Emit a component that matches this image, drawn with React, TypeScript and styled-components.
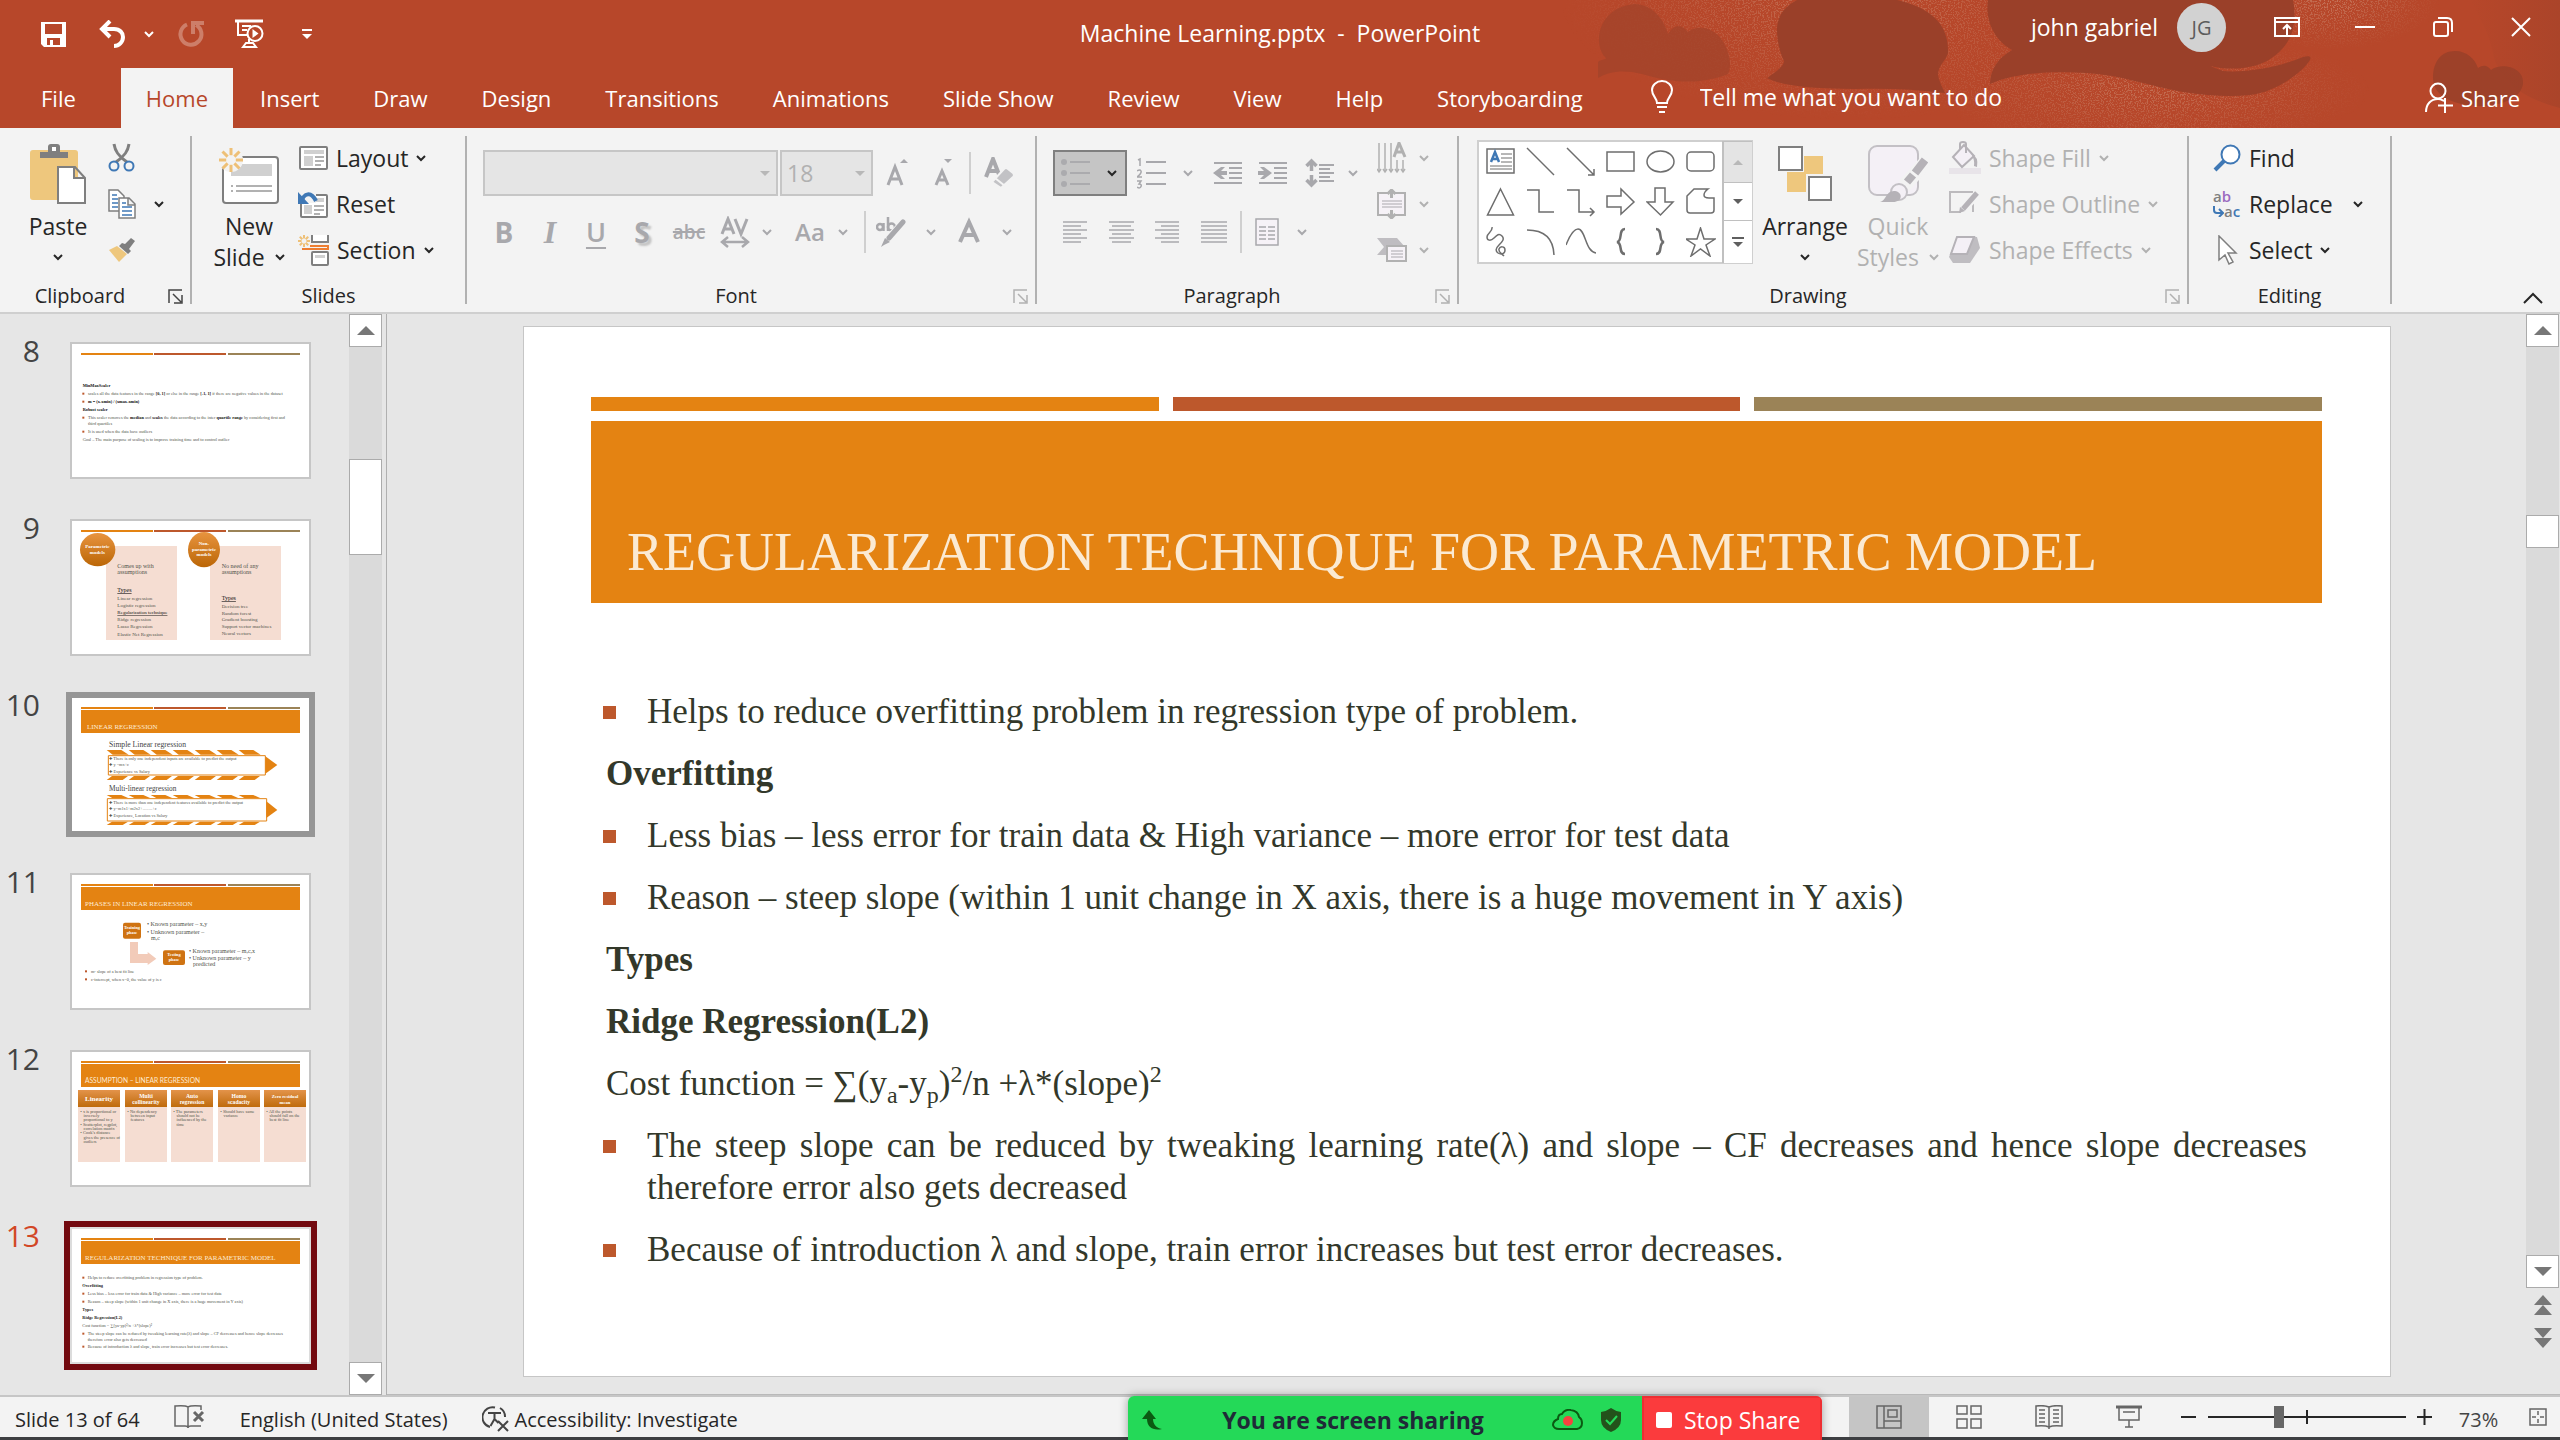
import React from "react";
import styled, { createGlobalStyle, css } from "styled-components";

/* ---------- tokens ---------- */

const brand = "#b7472a";
const brandDark = "#9a4029";
const surface = "#f3f3f3";
const canvas = "#e6e6e6";
const ink = "#262626";
const muted = "#b1b1b1";
const orange = "#e48312";
const rust = "#bd582c";
const khaki = "#9b8357";
const ui = `"Open Sans", "Noto Sans", sans-serif`;
const serif = `"Liberation Serif", "Times New Roman", serif`;

const GlobalStyle = createGlobalStyle`
  *, *::before, *::after { box-sizing: border-box; }
  html, body { margin: 0; height: 100%; }
  #root { height: 100%; }
  body { background: ${canvas}; color: ${ink}; font-family: ${ui}; font-size: 23px; }
  button, input, select { font: inherit; color: inherit; }
  button { background: none; border: 0; padding: 0; margin: 0; }
  svg { display: block; flex: none; }
`;

const Window = styled.div`
  display: flex;
  flex-direction: column;
  height: 100vh;
  min-height: 900px;
  overflow: hidden;
`;

/* ---------- header ---------- */

const Header = styled.header`
  position: relative;
  flex: none;
  background: ${brand};
  color: #fff;
`;

const Artwork = styled.svg`
  position: absolute;
  top: 0;
  right: 0;
  width: 1010px;
  height: 128px;
`;

const TitleBar = styled.div`
  position: relative;
  display: grid;
  grid-template-columns: 1fr auto 1fr;
  height: 68px;
`;

const QuickAccess = styled.div`
  display: flex;
  align-items: center;
  gap: 18px;
  padding-left: 40px;
`;

const QuickButton = styled.button<{ $gap?: number }>`
  display: flex;
  align-items: center;
  height: 60px;
  margin-left: ${(p) => p.$gap ?? 0}px;
`;

const DocumentTitle = styled.h1`
  margin: 0;
  font-size: 23px;
  font-weight: 400;
  line-height: 66px;
  white-space: pre;
`;

const WindowArea = styled.div`
  display: flex;
  justify-content: flex-end;
  align-items: center;
  height: 54px;
`;

const UserName = styled.span`
  margin-right: 19px;
  line-height: 56px;
`;

const Avatar = styled.button`
  width: 49px;
  height: 49px;
  margin-right: 22px;
  border-radius: 50%;
  background: #d2d2d2;
  color: #5c5c5c;
  font-size: 20px;
`;

const WindowButton = styled.button`
  display: grid;
  place-items: center;
  width: 78px;
  height: 54px;
`;

const TabBar = styled.div`
  position: relative;
  display: flex;
  align-items: stretch;
  height: 60px;
`;

const Tabs = styled.nav`
  display: flex;
  font-size: 22px;
`;

const Tab = styled.button<{ $active?: boolean; $file?: boolean }>`
  padding: ${(p) => (p.$file ? "0 45px 0 41px" : "0 27px")};
  ${(p) =>
    p.$active &&
    css`
      padding: 0 25px;
      background: ${surface};
      color: ${brand};
    `}
`;

const TellMe = styled.label`
  display: flex;
  flex: 1;
  align-items: center;
  gap: 26px;
  padding: 0 0 3px 40px;
`;

const TellMeInput = styled.input`
  width: 420px;
  padding: 0;
  border: 0;
  outline: 0;
  background: transparent;
  font-size: 23px;
  &::placeholder {
    color: #fff;
    opacity: 1;
  }
`;

const ShareButton = styled.button`
  display: flex;
  align-items: center;
  gap: 8px;
  padding: 0 40px 0 0;
  font-size: 22px;
`;

/* ---------- ribbon ---------- */

const Ribbon = styled.div`
  display: flex;
  flex: none;
  height: 186px;
  background: ${surface};
  border-bottom: 2px solid #cfcfcf;
`;

const Divider = styled.div<{ $tall?: boolean; $gap?: number }>`
  flex: none;
  width: 2px;
  margin-left: ${(p) => p.$gap ?? 0}px;
  ${(p) =>
    p.$tall
      ? css`
          height: 168px;
          margin-top: 8px;
          background: ${muted};
        `
      : css`
          height: 42px;
          background: #cfcfcf;
        `}
`;

const Group = styled.section<{ $width: number }>`
  display: flex;
  flex: none;
  flex-direction: column;
  width: ${(p) => p.$width}px;
  padding-top: 7px;
`;

const GroupBody = styled.div<{ $pad: number }>`
  display: flex;
  height: 138px;
  padding-left: ${(p) => p.$pad}px;
`;

const GroupFooter = styled.div`
  display: flex;
  align-items: center;
  height: 32px;
  margin-top: 7px;
`;

const GroupLabel = styled.h2`
  flex: 1;
  margin: 0;
  font-size: 20px;
  font-weight: 400;
  line-height: 32px;
  text-align: center;
`;

const Launcher = styled.button<{ $off?: boolean }>`
  display: grid;
  place-items: center;
  width: 30px;
  height: 32px;
  color: ${(p) => (p.$off ? muted : "#444")};
`;

const BigButton = styled.button<{ $width: number; $gap?: number }>`
  display: flex;
  flex-direction: column;
  align-items: center;
  width: ${(p) => p.$width}px;
  margin-left: ${(p) => p.$gap ?? 0}px;
  padding-top: 8px;
  line-height: 31px;
  &:disabled {
    color: ${muted};
  }
`;

const BigIcon = styled.span`
  display: grid;
  place-items: center;
  height: 62px;
  margin-bottom: 6px;
`;

const BigLine = styled.span`
  display: flex;
  align-items: center;
  justify-content: center;
  gap: 10px;
  height: 31px;
`;

const Stack = styled.div<{ $gap: number }>`
  display: flex;
  flex-direction: column;
  align-items: flex-start;
  margin-left: ${(p) => p.$gap}px;
`;

const SmallButton = styled.button<{ $gap?: number }>`
  display: flex;
  align-items: center;
  gap: ${(p) => p.$gap ?? 8}px;
  height: 46px;
  white-space: nowrap;
  &:disabled {
    color: ${muted};
  }
`;

const ToolRows = styled.div`
  display: flex;
  flex-direction: column;
  gap: 13px;
  padding-top: 15px;
  color: #a8a8ac;
`;

const ToolRow = styled.div<{ $pad?: number }>`
  display: flex;
  align-items: center;
  height: 46px;
  padding-left: ${(p) => p.$pad ?? 0}px;
`;

const Tool = styled.button<{ $width: number; $gap?: number }>`
  display: grid;
  place-items: center;
  width: ${(p) => p.$width}px;
  height: 46px;
  margin-left: ${(p) => p.$gap ?? 0}px;
`;

const BulletsButton = styled.button`
  display: flex;
  align-items: center;
  justify-content: space-between;
  width: 74px;
  height: 46px;
  margin-right: 8px;
  padding: 0 8px 0 6px;
  border: 2px solid #7f7f7f;
  background: #c5c5c5;
`;

const Combo = styled.div<{ $width: number }>`
  position: relative;
  width: ${(p) => p.$width}px;
  height: 46px;
  margin-right: 2px;
`;

const ComboSelect = styled.select`
  width: 100%;
  height: 100%;
  padding: 0 0 0 5px;
  border: 2px solid #c6c6c6;
  border-radius: 0;
  background: #e5e5e5;
  color: ${muted};
  font-size: 23px;
  appearance: none;
  opacity: 1;
`;

const ComboArrow = styled.svg`
  position: absolute;
  top: 21px;
  right: 8px;
  pointer-events: none;
`;

const glyphs = {
  bold: css`
    font-size: 28px;
    font-weight: 700;
  `,
  italic: css`
    font-family: ${serif};
    font-size: 32px;
    font-style: italic;
    font-weight: 700;
  `,
  underline: css`
    font-size: 27px;
    font-weight: 600;
    text-decoration: underline;
    text-decoration-thickness: 2px;
    text-underline-offset: 5px;
  `,
  shadow: css`
    font-size: 28px;
    font-weight: 700;
    text-shadow: 3px 3px 2px #c4c4c4;
  `,
  strike: css`
    font-size: 19px;
    font-weight: 600;
    text-decoration: line-through;
    text-decoration-thickness: 2px;
  `,
  case: css`
    font-size: 24px;
    font-weight: 600;
  `,
};

const Glyph = styled.span<{ $kind: keyof typeof glyphs }>`
  line-height: 30px;
  ${(p) => glyphs[p.$kind]}
`;

const Gallery = styled.div`
  display: flex;
  width: 276px;
  height: 124px;
  margin-top: 5px;
  border: 2px solid #cfcfcf;
  background: #fff;
`;

const ShapeGrid = styled.div`
  display: grid;
  grid-template-columns: repeat(6, 40px);
  grid-auto-rows: 40px;
  flex: 1;
  padding-left: 2px;
`;

const ShapeCell = styled.button`
  display: grid;
  place-items: center;
`;

const GalleryScroll = styled.div`
  display: grid;
  grid-template-rows: 41px 38px 1fr;
  width: 30px;
  margin: -1px -1px;
  border-left: 2px solid #c0c0c0;
`;

const GalleryScrollButton = styled.button<{ $off?: boolean }>`
  display: grid;
  place-items: center;
  border-top: 1px solid #c0c0c0;
  background: ${(p) => (p.$off ? "#e4e4e4" : "#fff")};
  color: ${(p) => (p.$off ? "#b8b8b8" : "#5f5f5f")};
`;

const RibbonTail = styled.div`
  display: flex;
  flex: 1;
  align-items: flex-end;
  justify-content: flex-end;
  padding: 0 17px 8px 0;
`;

/* ---------- workspace ---------- */

const Workspace = styled.main`
  display: flex;
  flex: 1;
  min-height: 0;
`;

const Panel = styled.aside`
  display: flex;
  flex: none;
  width: 387px;
  border-right: 1px solid #b0b0b0;
`;

const SlideList = styled.ol`
  flex: 1;
  margin: 0;
  padding: 28px 0 0;
  overflow: hidden;
  list-style: none;
`;

const SlideItem = styled.li`
  display: grid;
  grid-template-columns: 40px 241px;
  column-gap: 30px;
  height: 177px;
`;

const SlideNumber = styled.span<{ $active?: boolean }>`
  font-size: 30px;
  line-height: 18px;
  text-align: right;
  color: ${(p) => (p.$active ? "#d24726" : "#444")};
`;

const Thumb = styled.button<{ $state?: "hover" | "active" }>`
  height: 137px;
  border: 2px solid ${(p) => (p.$state === "hover" ? "#969696" : p.$state === "active" ? "#dcdcdc" : "#c6c6c6")};
  background: #fff;
  ${(p) => p.$state === "hover" && "box-shadow: 0 0 0 4px #969696;"}
  ${(p) => p.$state === "active" && "box-shadow: 0 0 0 6px #730a10;"}
`;

const ScrollRail = styled.div<{ $gap: number; $end?: number }>`
  display: flex;
  flex: none;
  flex-direction: column;
  width: 33px;
  margin-right: ${(p) => p.$gap}px;
  padding-bottom: ${(p) => p.$end ?? 0}px;
`;

const ScrollArrow = styled.button`
  display: grid;
  flex: none;
  place-items: center;
  height: 33px;
  border: 1px solid #ababab;
  background: #fff;
  color: #777;
`;

const ScrollTrack = styled.div<{ $before: number }>`
  flex: 1;
  padding-top: ${(p) => p.$before}px;
  background: #dadada;
`;

const ScrollThumb = styled.div<{ $height: number }>`
  height: ${(p) => p.$height}px;
  border: 1px solid #ababab;
  background: #fff;
`;

const SlideJump = styled.button`
  display: grid;
  flex: none;
  place-items: center;
  height: 33px;
  color: #777;
`;

const Pane = styled.div`
  display: flex;
  flex: 1;
  min-width: 0;
  border-bottom: 1px solid #b9b9b9;
`;

const Stage = styled.div`
  flex: 1;
  min-width: 0;
  padding: 12px 135px 0 136px;
`;

const Slide = styled.article`
  display: flex;
  flex-direction: column;
  aspect-ratio: 16 / 9;
  padding: 70px 68px 0 67px;
  border: 1px solid #c6c6c6;
  background: #fff;
  color: #33382a;
  font-family: ${serif};
`;

const AccentBars = styled.div`
  display: grid;
  grid-template-columns: repeat(3, 1fr);
  gap: 14px;
  margin-bottom: 10px;
`;

const AccentBar = styled.span<{ $color: string }>`
  height: 14px;
  background: ${(p) => p.$color};
`;

const SlideTitle = styled.h2`
  display: flex;
  align-items: flex-end;
  height: 182px;
  margin: 0 0 88px;
  padding: 0 36px 20px;
  background: ${orange};
  color: #fbead3;
  font-size: 54px;
  font-weight: 400;
  line-height: 62px;
  white-space: nowrap;
`;

const SlideBody = styled.div`
  display: flex;
  flex-direction: column;
  gap: 20px;
  padding: 0 15px;
`;

const Para = styled.p<{ $bullet?: boolean; $bold?: boolean }>`
  margin: 0;
  font-size: 35px;
  line-height: 42px;
  text-align: justify;
  ${(p) => p.$bold && "font-weight: 700;"}
  ${(p) =>
    p.$bullet &&
    css`
      display: grid;
      grid-template-columns: 44px 1fr;
      margin-left: -3px;
      &::before {
        content: "";
        width: 13px;
        height: 13px;
        margin-top: 15px;
        background: ${rust};
      }
    `}
  sub, sup {
    font-size: 24px;
    line-height: 0;
  }
`;

/* ---------- status bar ---------- */

const StatusBar = styled.footer`
  position: relative;
  display: flex;
  flex: none;
  align-items: stretch;
  height: 45px;
  border-top: 2px solid #c6c6c6;
  border-bottom: 3px solid #3e3f42;
  background: ${surface};
  font-size: 20px;
`;

const StatusLeft = styled.div`
  display: flex;
  flex: 1;
  align-items: center;
  gap: 34px;
  padding: 4px 0 0 15px;
`;

const StatusItem = styled.button`
  display: flex;
  align-items: center;
  gap: 3px;
`;

const StatusRight = styled.div`
  display: flex;
  align-items: center;
  padding-right: 13px;
`;

const ViewButton = styled.button<{ $active?: boolean }>`
  display: grid;
  place-items: center;
  width: 80px;
  height: 100%;
  background: ${(p) => (p.$active ? "#c5c5c5" : "none")};
`;

const ZoomButton = styled.button<{ $before: number; $after: number }>`
  margin: 0 ${(p) => p.$after}px 0 ${(p) => p.$before}px;
`;

const ZoomSlider = styled.input`
  width: 198px;
  height: 24px;
  margin: 0;
  appearance: none;
  background:
    linear-gradient(${ink}, ${ink}) 98px center / 2px 14px no-repeat,
    linear-gradient(${ink}, ${ink}) center / 100% 2px no-repeat;
  &::-webkit-slider-thumb {
    appearance: none;
    width: 10px;
    height: 22px;
    background: #666;
  }
`;

const ZoomValue = styled.button`
  width: 41px;
  margin-right: 30px;
  padding-top: 4px;
  color: #444;
`;

const ShareBar = styled.div`
  position: absolute;
  bottom: -3px;
  left: 50%;
  display: flex;
  width: 694px;
  height: 44px;
  margin-left: -152px;
  overflow: hidden;
  border-radius: 6px 6px 0 0;
  box-shadow: 0 0 10px rgba(0, 0, 0, 0.35);
  font-size: 23px;
`;

const ShareStatus = styled.div`
  display: flex;
  flex: 1;
  align-items: center;
  padding: 3px 21px 0 14px;
  background: #24d958;
  color: #1f2a37;
  font-weight: 700;
`;

const ShareText = styled.span`
  flex: 1;
  padding-left: 10px;
  text-align: center;
`;

const ShareIcon = styled.span`
  margin-left: 18px;
`;

const StopShare = styled.button`
  display: flex;
  align-items: center;
  gap: 12px;
  width: 180px;
  padding: 2px 0 0 12px;
  border: 2px solid #ee2f33;
  border-bottom: 0;
  background: #fb3b3d;
  color: #fff;
`;

/* ---------- icons ---------- */

type IconProps = { w: number; h: number; children: React.ReactNode; stroke?: string; sw?: number };
const Icon = ({ w, h, children, stroke = "currentColor", sw = 2 }: IconProps) => (
  <svg width={w} height={h} viewBox={`0 0 ${w} ${h}`} fill="none" stroke={stroke} strokeWidth={sw} aria-hidden="true">
    {children}
  </svg>
);

const Chevron = () => (
  <Icon w={10} h={7}>
    <path d="M1 1l4 4 4-4" />
  </Icon>
);

const Triangle = ({ up, size = 18 }: { up?: boolean; size?: number }) => (
  <svg width={size} height={size / 2} viewBox="0 0 16 8" fill="currentColor" aria-hidden="true">
    <path d={up ? "M0 8L8 0l8 8z" : "M0 0h16L8 8z"} />
  </svg>
);

const SaveIcon = () => (
  <Icon w={27} h={26} sw={0}>
    <path fill="#fff" fillRule="evenodd" d="M1 1h25v25H4l-3-3zM5 3v10h17V3zM7 17v7h3v-5h3v5h7v-7z" />
  </Icon>
);
const UndoIcon = () => (
  <Icon w={28} h={28} stroke="#fff" sw={4}>
    <path d="M12 1L4 9l8 8M5 9h11c6 0 9 4 9 8 0 5-4 9-9 9" />
  </Icon>
);
const RedoIcon = () => (
  <Icon w={28} h={28} stroke="#cd7e69" sw={4}>
    <path d="M10 4.500A10.500 10.500 0 1 0 19 5M16 14V3h11" />
  </Icon>
);
const PresentIcon = () => (
  <Icon w={30} h={30} stroke="#fff">
    <path strokeWidth="3" d="M1 2h28" />
    <path d="M4 3v13h10M8 7h9M8 11h5M15 20v4M9 28l3-4h7l3 4z" />
    <circle cx="21" cy="14.500" r="7.500" fill={brand} />
    <path fill="#fff" stroke="none" d="M18.500 10v9l6-4.500z" />
  </Icon>
);
const CustomizeIcon = () => (
  <Icon w={10} h={12} stroke="#fff">
    <path d="M0 2h10" />
    <path fill="#fff" stroke="none" d="M0 6h10l-5 5z" />
  </Icon>
);
const DisplayIcon = () => (
  <Icon w={26} h={20}>
    <path d="M1 1h24v18H1zM1 5h24M13 18V8M9 12l4-4 4 4" />
  </Icon>
);
const MinIcon = () => (
  <Icon w={20} h={2}>
    <path d="M0 1h20" />
  </Icon>
);
const RestoreIcon = () => (
  <Icon w={20} h={20}>
    <rect x="1" y="5" width="14" height="14" rx="2" />
    <path d="M5 1h9q5 0 5 5v9" />
  </Icon>
);
const CloseIcon = () => (
  <Icon w={20} h={20}>
    <path d="M1 1l18 18M19 1L1 19" />
  </Icon>
);
const BulbIcon = () => (
  <Icon w={24} h={34} stroke="#fff">
    <path d="M7 23c0-5-5-7-5-13a10 9 0 0 1 20 0c0 6-5 8-5 13zM7 27h10M9 32h6" />
  </Icon>
);
const PersonIcon = () => (
  <Icon w={28} h={32} stroke="#fff">
    <circle cx="13" cy="9" r="7.500" />
    <path d="M1 30c0-8 5-13 12-13 3 0 4 1 6 2M20 16v15M13 23.500h15" />
  </Icon>
);

const PasteIcon = () => (
  <Icon w={56} h={60} sw={2}>
    <rect x="0" y="6" width="48" height="50" rx="3" fill="#eec77d" stroke="none" />
    <path fill="#7f7f7f" stroke="none" d="M10 14V8h8V3q0-3 3-3h6q3 0 3 3v5h8v6z" />
    <rect x="22" y="3" width="4" height="4" fill="#fff" stroke="none" />
    <path fill="#fff" stroke="#7f7f7f" d="M28 23h17l10 11v25H28zM44 23v11h11" />
  </Icon>
);
const CutIcon = () => (
  <Icon w={27} h={30}>
    <path stroke="#7f7f7f" strokeWidth="3" d="M6 1c1 7 4 12 13 18M21 1c-1 7-4 12-13 18" />
    <circle cx="6" cy="23" r="4.500" stroke="#3f78b5" />
    <circle cx="21" cy="23" r="4.500" stroke="#3f78b5" />
  </Icon>
);
const CopyIcon = () => (
  <Icon w={28} h={30} sw={1.500}>
    <path fill="#fff" stroke="#7f7f7f" d="M1 1h9l6 6v15H1z" />
    <path stroke="#3f78b5" d="M4 6h5M4 10h6M4 14h6M4 18h6" />
    <path fill="#fff" stroke="#7f7f7f" d="M11 9h10l6 6v14H11zM20 9v7h7" />
    <path stroke="#3f78b5" d="M14 14h4M14 18h10M14 22h10M14 26h10" />
  </Icon>
);
const PainterIcon = () => (
  <Icon w={27} h={24} sw={0}>
    <path fill="#7f7f7f" d="M23 0l4 3-6 8 2 2-3 3-9-8 3-3 3 1z" />
    <path fill="#eec77d" d="M9 8l10 8-8 8L1 12z" />
  </Icon>
);
const Burst = ({ x, y, r }: { x: number; y: number; r: number }) => (
  <g transform={`translate(${x} ${y})`} stroke="#eec077" strokeWidth={r > 9 ? 3 : 2}>
    {[0, 45, 90, 135, 180, 225, 270, 315].map((a) => (
      <path key={a} transform={`rotate(${a})`} d={`M0 ${-r / 2.5}V${-r}`} />
    ))}
  </g>
);
const NewSlideIcon = () => (
  <Icon w={62} h={60}>
    <rect x="5" y="13" width="55" height="46" rx="3" fill="#fff" stroke="#7f7f7f" />
    <path fill="#d0d0d0" stroke="none" d="M13 20h41v12H13z" />
    <path stroke="#b1b1b1" d="M13 42h2M18 42h36M13 47h2M18 47h36" />
    <circle cx="13" cy="16" r="12" fill={surface} stroke="none" />
    <Burst x={13} y={16} r={12} />
  </Icon>
);
const LayoutIcon = () => (
  <Icon w={30} h={26}>
    <rect x="2" y="2" width="27" height="22" rx="1" fill="#fff" stroke="#7f7f7f" />
    <path fill="#d0d0d0" stroke="none" d="M6 5h20v4H6zM6 11h9v10H6z" />
    <path stroke="#b1b1b1" d="M17 12h9M17 16h9M17 20h6" />
  </Icon>
);
const ResetIcon = () => (
  <Icon w={30} h={28}>
    <rect x="3" y="5" width="26" height="22" rx="1" fill="#fff" stroke="#7f7f7f" />
    <path fill="#d0d0d0" stroke="none" d="M18 8h8v4h-8zM6 15h8v9H6z" />
    <path stroke="#b1b1b1" d="M16 16h10M16 20h10M16 24h6" />
    <path fill={surface} stroke="none" d="M0 0h18v13H0z" />
    <path stroke="#3f78b5" strokeWidth="4" d="M3 12C6 3 13 1 18 11" />
    <path fill="#3f78b5" stroke="none" d="M0 2v12h11z" />
  </Icon>
);
const SectionIcon = () => (
  <Icon w={31} h={32}>
    <path fill="#fff" stroke="#7f7f7f" d="M14 1v7h16V1" />
    <path stroke="#ed7d31" d="M4 15h26v-3H12" />
    <rect x="14" y="18" width="16" height="13" rx="1" fill="#fff" stroke="#7f7f7f" />
    <path fill="#d0d0d0" stroke="none" d="M17 21h10v3H17z" />
    <Burst x={6} y={7} r={6} />
  </Icon>
);
const LauncherIcon = () => (
  <Icon w={15} h={15} sw={1.500}>
    <path d="M1 14V1h13M5 5l8 8M14 6v8H6" />
  </Icon>
);

const GrowFont = ({ small }: { small?: boolean }) => (
  <Icon w={26} h={30} sw={3}>
    {small ? (
      <>
        <path d="M3 27L9 13l6 14M5 22h8" />
        <path fill="currentColor" stroke="none" d="M11 1h8l-4 4z" />
      </>
    ) : (
      <>
        <path d="M2 27L9 9l7 18M5 21h9" />
        <path fill="currentColor" stroke="none" d="M14 5h8l-4-4z" />
      </>
    )}
  </Icon>
);
const EraserIcon = () => (
  <Icon w={30} h={32} sw={4}>
    <path d="M2 20L9 2l7 18M5 14h9" />
    <path fill="#c2c2c5" stroke={surface} strokeWidth="2" d="M8 25l12-13q2-2 4 0l5 4q2 2 0 4L17 31z" />
    <path stroke={surface} strokeWidth="2" d="M11 21l10 8" />
  </Icon>
);
const SpacingIcon = () => (
  <Icon w={30} h={32} sw={3}>
    <path d="M2 18L8 3l6 15M4 13h8M15 3l6 15 6-15" />
    <path strokeWidth="2.500" d="M2 26h26M8 21l-6 5 6 5M22 21l6 5-6 5" />
  </Icon>
);
const HighlightIcon = () => (
  <Icon w={30} h={32} sw={2.500}>
    <circle cx="4" cy="11" r="3" />
    <path d="M7.500 7v8M12 1v14" />
    <circle cx="15.500" cy="11" r="3.500" />
    <path stroke={surface} strokeWidth="9" d="M9 27L27 8" />
    <path strokeWidth="5" strokeLinecap="round" d="M13 22L27 6" />
    <path fill="currentColor" stroke="none" d="M9 22l5 4-6 3-3 2z" />
  </Icon>
);
const FontColorIcon = () => (
  <Icon w={22} h={30} sw={4}>
    <path d="M2 25L11 5l9 20M5 18h12" />
  </Icon>
);
const BulletsIcon = () => (
  <Icon w={30} h={30}>
    <g fill="#ababae" stroke="none">
      <circle cx="3" cy="4" r="3" />
      <circle cx="3" cy="15" r="3" />
      <circle cx="3" cy="26" r="3" />
    </g>
    <path stroke="#ababae" d="M9 4h20M9 15h20M9 26h20" />
  </Icon>
);
const NumberingIcon = () => (
  <Icon w={30} h={32}>
    <path strokeWidth="1.500" d="M1 3l2-1v7M0 14q3-2 4 0t-4 6h5M0 24h4l-2 3q3 0 2 2.500T0 30" />
    <path d="M9 5h20M9 16h20M9 27h20" />
  </Icon>
);
const IndentIcon = ({ out }: { out?: boolean }) => (
  <Icon w={30} h={24}>
    <path d="M1 2h28M16 7h13M16 12h13M16 17h13M1 22h28" />
    {out ? (
      <path fill="currentColor" stroke="none" d="M0 12l8-6h4l-4 4h6v4H8l4 4H8z" />
    ) : (
      <path fill="currentColor" stroke="none" d="M14 12L6 6H2l4 4H0v4h6l-4 4h4z" />
    )}
  </Icon>
);
const LineSpacingIcon = () => (
  <Icon w={30} h={30}>
    <path d="M14 7h15M14 11h11M14 15h15M14 19h11M14 23h15" />
    <path strokeWidth="3.500" d="M6.500 3v10M6.500 17v10M1.500 8l5-5 5 5M1.500 22l5 5 5-5" />
  </Icon>
);
const AlignIcon = ({ kind }: { kind: "left" | "center" | "right" | "full" }) => {
  const short = { left: [0, 18], center: [3, 22], right: [6, 24], full: [0, 26] }[kind];
  const long = kind === "center" ? [0, 25] : kind === "full" ? [0, 26] : [0, 24];
  return (
    <Icon w={26} h={24} sw={1.500}>
      {[2, 6, 10, 14, 18, 22].map((y, i) => {
        const [a, b] = i % 2 ? short : long;
        return <path key={y} d={`M${a} ${y}H${b}`} />;
      })}
    </Icon>
  );
};
const ColumnsIcon = () => (
  <Icon w={24} h={28} sw={1.500}>
    <rect x="1" y="1" width="22" height="26" fill="#f6f2f7" />
    <path d="M4 9h7M4 13h7M4 17h7M4 21h7M13 9h7M13 13h7M13 17h7M13 21h7" />
  </Icon>
);
const TextDirectionIcon = () => (
  <Icon w={30} h={32}>
    <path strokeWidth="1.500" d="M2 1v28M8 1v28M14 1v28M20 18v11M26 18v11" />
    <path strokeWidth="1.500" d="M0 27l2 3 2-3M6 27l2 3 2-3M12 27l2 3 2-3M18 27l2 3 2-3M24 27l2 3 2-3" />
    <path strokeWidth="3" d="M17 15l5-14 6 14M19 10h7" />
  </Icon>
);
const AlignTextIcon = () => (
  <Icon w={30} h={30}>
    <rect x="1" y="4" width="27" height="22" fill="#f6f2f7" />
    <path stroke="#d0cdd2" d="M5 12h20M5 15h20M5 18h20" />
    <path stroke={surface} strokeWidth="7" d="M14.500 0v8M14.500 22v8" />
    <path strokeWidth="3" d="M14.500 9V2M10.500 5l4-4 4 4M14.500 21v7M10.500 25l4 4 4-4" />
  </Icon>
);
const SmartArtIcon = () => (
  <Icon w={30} h={26}>
    <path fill="#bfbdc1" stroke="none" d="M0 1h20l8 9-8 8H0l7-8z" />
    <rect x="10" y="9" width="19" height="15" fill="#f6f2f7" />
    <path stroke="#d0cdd2" d="M14 14h12M14 17h12M14 20h12" />
  </Icon>
);

const shapes: React.ReactNode[] = [
  <g key="t">
    <path d="M1 2h27v24H1z" />
    <path strokeWidth="1" d="M15 7h11M15 11h11M15 15h11M4 19h22M4 22h22" />
    <path stroke="#3f78b5" strokeWidth="2.500" d="M5 15l4-10 4 10M6 12h6" />
  </g>,
  <path key="l" d="M1 1l27 27" />,
  <path key="a" d="M1 1l27 27M28 22v6h-6" />,
  <path key="r" d="M1 5h27v19H1z" />,
  <ellipse key="e" cx="14.500" cy="14.500" rx="13.500" ry="10.500" />,
  <rect key="rr" x="1" y="5" width="27" height="19" rx="4" />,
  <path key="tri" d="M14.500 2l13 26h-26z" />,
  <path key="el" d="M1 3h12v22h15" />,
  <path key="ela" d="M1 3h12v22h15M24 21l4 4-4 4" />,
  <path key="ra" d="M1 9h14V2l13 13-13 12v-7H1z" />,
  <path key="da" d="M9 1h10v14h8L14.500 28 1 15h8z" />,
  <path key="fr" d="M1 9l7-7h14q-4 3-4 6t5 3h5v12q0 3-3 3H4q-3 0-3-3z" />,
  <path key="s" d="M6 0c1 5-5 6-5 10s4 4 7 1 5-5 8-2 0 6-3 9-4 6-1 8 7 1 7-3-5-4-6-1 2 4 5 7" />,
  <path key="c" d="M1 3q26 0 27 25" />,
  <path key="w" d="M0 18C4 8 8 2 12 2c8 0 7 24 19 24" />,
  <path key="lb" strokeWidth="2.500" d="M19 2c-7 0-2 12-8 13 6 1 1 12 8 12" />,
  <path key="rb" strokeWidth="2.500" d="M10 2c7 0 2 12 8 13-6 1-1 12-8 12" />,
  <path key="st" d="M14.500 1l3.500 11h11l-9 6 4 11-9.500-7L5 29l4-11-9-6h11z" />,
];
const ShapeIcon = ({ index }: { index: number }) => (
  <Icon w={30} h={30} stroke="#6e6e6e" sw={1.500}>
    {shapes[index]}
  </Icon>
);

const ArrangeIcon = () => (
  <Icon w={54} h={56}>
    <path fill="#eec77d" stroke="none" d="M9 10h37v36H9z" />
    <path fill={surface} stroke="none" d="M0 0h26v26H0zM28 28h26v26H28z" />
    <path fill={surface} stroke="none" d="M7 8h3v17H7zM0 46h30v9H0zM45 0h9v28h-9z" />
    <path fill="#fff" stroke="#7f7f7f" d="M1 1h23v23H1zM31 31h22v23H31z" />
  </Icon>
);
const QuickStylesIcon = () => (
  <Icon w={60} h={60}>
    <rect x="1" y="2" width="49" height="49" rx="8" fill="#f4f0f6" stroke="#c3c0c5" />
    <path stroke={surface} strokeWidth="14" d="M56 20L36 42" />
    <path stroke="#b5b2b7" strokeWidth="8" d="M57 16L47 29M45 31l-6 7" />
    <circle cx="31" cy="48" r="8" fill="#f4f0f6" stroke="#c3c0c5" />
    <path fill="#b5b2b7" stroke="none" d="M12 58c6-1 6-12 15-11 8 1 8 11-2 11z" />
  </Icon>
);
const FillIcon = () => (
  <Icon w={32} h={34}>
    <path fill="#e8e4e9" stroke="none" d="M0 27h32v6H0z" />
    <path fill="#f4f0f6" stroke="#b5b2b7" d="M4 16L15 4l10 11-12 11z" />
    <path stroke="#b5b2b7" d="M11 8V3q0-2 3-2t3 2v9" />
    <path fill="#b5b2b7" stroke="none" d="M22 12q8 4 6 14l-3-1q1-6-3-13z" />
  </Icon>
);
const OutlineIcon = () => (
  <Icon w={32} h={30}>
    <path stroke="#bcbabd" d="M24 3H1v20h11M24 12v11" />
    <path stroke={surface} strokeWidth="8" d="M29 4L13 22" />
    <path stroke="#b5b2b7" strokeWidth="5" d="M28 4L14 20" />
    <path fill="#b5b2b7" stroke="none" d="M11 18l5 4-6 2z" />
  </Icon>
);
const EffectsIcon = () => (
  <Icon w={32} h={30}>
    <path fill="#bfbdc1" stroke="none" d="M8 2h20l3 11-10 15H4l-4-6z" />
    <path fill="#f4f0f6" stroke="#b5b2b7" d="M8 2h17l-7 17H2z" />
  </Icon>
);
const FindIcon = () => (
  <Icon w={28} h={28} stroke="#3f78b5">
    <path strokeWidth="4" d="M2 26l10-10" />
    <circle cx="17.500" cy="10.500" r="9" fill="#fff" />
  </Icon>
);
const ReplaceMark = styled.span`
  display: flex;
  flex-direction: column;
  width: 28px;
  font-size: 15px;
  font-weight: 600;
  line-height: 15px;
  color: #7f7f7f;
`;
const ReplaceLine = styled.span`
  display: flex;
  align-items: center;
`;
const Tint = styled.span<{ $color: string }>`
  color: ${(p) => p.$color};
`;
const SelectIcon = () => (
  <Icon w={28} h={30} sw={1.500}>
    <path fill="#fff" stroke="#7f7f7f" d="M6 1l17 17h-8l5 9-4 2-4-9-6 5z" />
  </Icon>
);

/* ---------- slide thumbnails ---------- */

type TextProps = { x: number; y: number; s?: number; c?: string; b?: boolean; mid?: boolean; u?: boolean; children: React.ReactNode };
const T = ({ x, y, s = 13, c = "#50534a", b, mid, u, children }: TextProps) => (
  <text x={x} y={y} fontSize={s} fill={c} fontWeight={b ? 700 : 400} textAnchor={mid ? "middle" : "start"} textDecoration={u ? "underline" : undefined}>
    {children}
  </text>
);
const Dot = ({ y, x = 31 }: { y: number; x?: number }) => <rect x={x} y={y - 7} width="6" height="6" fill={rust} />;

const Mini = ({ title, titleX = 39, sans, children }: { title?: string; titleX?: number; sans?: boolean; children: React.ReactNode }) => (
  <svg width="237" height="133" viewBox="0 0 711 399" fontFamily={serif} role="img" aria-label={title ?? "Slide"}>
    <path fill={orange} d="M27 27h216v6H27z" />
    <path fill={rust} d="M246 27h216v6H246z" />
    <path fill={khaki} d="M468 27h216v6H468z" />
    {title && (
      <>
        <path fill={orange} d="M27 36h657v69H27z" />
        <text x={titleX} y="93" fontSize={sans ? 20 : 21} fill="#fdebd5" fontFamily={sans ? "Lato, sans-serif" : serif}>
          {title}
        </text>
      </>
    )}
    {children}
  </svg>
);

const Slide8 = () => (
  <Mini>
    <T x={32} y={129} b c="#111">MinMaxScaler</T>
    <Dot y={153} />
    <T x={48} y={153}>scales all the data features in the range <tspan fontWeight="700" fill="#222">[0, 1]</tspan> or else in the range <tspan fontWeight="700" fill="#222">[-1, 1]</tspan> if there are negative values in the dataset</T>
    <Dot y={177} />
    <T x={48} y={177} b c="#111">m = (x-xmin) / (xmax-xmin)</T>
    <T x={32} y={201} b c="#111">Robust scaler</T>
    <Dot y={225} />
    <T x={48} y={225}>This scaler removes the <tspan fontWeight="700" fill="#111">median</tspan> and <tspan fontWeight="700" fill="#111">scales</tspan> the data according to the inter <tspan fontWeight="700" fill="#111">quartile range</tspan> by considering first and</T>
    <T x={48} y={243}>third quartiles</T>
    <Dot y={267} />
    <T x={48} y={267}>It is used when the data have outliers</T>
    <T x={32} y={291}>Goal – The main purpose of scaling is to improve training time and to control outlier</T>
  </Mini>
);

const Slide9 = () => (
  <Mini>
    <defs>
      <linearGradient id="knob" x1="0" y1="0" x2="0" y2="1">
        <stop offset="0" stopColor="#e8943f" />
        <stop offset="1" stopColor="#bb6606" />
      </linearGradient>
    </defs>
    <path fill="#f5ddd2" d="M102 75h213v282H102zM414 75h213v282H414z" />
    <ellipse cx="77" cy="86" rx="53" ry="50" fill="url(#knob)" />
    <ellipse cx="396" cy="86" rx="48" ry="53" fill="url(#knob)" />
    <T x={76} y={81} s={15} b mid c="#fff">Parametric</T>
    <T x={76} y={99} s={15} b mid c="#fff">models</T>
    <T x={396} y={72} s={15} b mid c="#fff">Non-</T>
    <T x={396} y={90} s={15} b mid c="#fff">parametric</T>
    <T x={396} y={105} s={15} b mid c="#fff">models</T>
    <T x={136} y={142} s={18}>Comes up with</T>
    <T x={136} y={160} s={18}>assumptions</T>
    <T x={136} y={214} s={18} u c="#111">Types</T>
    <T x={136} y={237} s={15}>Linear regression</T>
    <T x={136} y={258} s={15}>Logistic regression</T>
    <T x={136} y={279} s={15} u c="#111">Regularization technique</T>
    <T x={136} y={300} s={15}>Ridge regression</T>
    <T x={136} y={321} s={15}>Lasso Regression</T>
    <T x={136} y={345} s={15}>Elastic Net Regression</T>
    <T x={449} y={142} s={18}>No need of any</T>
    <T x={449} y={160} s={18}>assumptions</T>
    <T x={449} y={237} s={18} u c="#111">Types</T>
    <T x={449} y={261} s={15}>Decision tree</T>
    <T x={449} y={282} s={15}>Random forest</T>
    <T x={449} y={300} s={15}>Gradient boosting</T>
    <T x={449} y={321} s={15}>Support vector machines</T>
    <T x={449} y={342} s={15}>Neural vectors</T>
  </Mini>
);

const Stripes = ({ y, h, flip }: { y: number; h: number; flip?: boolean }) => (
  <g fill={orange}>
    {[0, 1, 2, 3, 4, 5, 6].map((i) => {
      const x = 104 + i * 66;
      return <path key={i} d={flip ? `M${x} ${y + h}l16 ${-h}h48l-16 ${h}z` : `M${x} ${y}h44l22 ${h}h-48z`} />;
    })}
  </g>
);

const Slide10 = () => (
  <Mini title="LINEAR REGRESSION" titleX={45}>
    <T x={111} y={147} s={23} c="#444">Simple Linear regression</T>
    <Stripes y={156} h={14} />
    <Stripes y={234} h={12} flip />
    <path fill="#fff" stroke={orange} strokeWidth="3" d="M109 173h471v58H109z" />
    <path fill={orange} d="M580 175l36 26-36 26z" />
    <T x={112} y={187} s={13}>✚ There is only one independent inputs are available to predict the output</T>
    <T x={112} y={205} s={13}>✚ y =mx+c</T>
    <T x={112} y={225} s={13}>✚ Experience vs Salary</T>
    <T x={111} y={279} s={22} c="#444">Multi-linear regression</T>
    <Stripes y={291} h={10} />
    <Stripes y={371} h={10} flip />
    <path fill="#fff" stroke={orange} strokeWidth="3" d="M106 302h478v67H106z" />
    <path fill={orange} d="M583 310l33 26-33 24z" />
    <T x={112} y={318} s={13}>✚ There is more than one independent features available to predict the output</T>
    <T x={112} y={336} s={13}>✚ y=m1x1+m2x2+…….+c</T>
    <T x={112} y={357} s={13}>✚ Experience, Location vs Salary</T>
  </Mini>
);

const Slide11 = () => (
  <Mini title="PHASES IN LINEAR REGRESSION">
    <rect x="153" y="143" width="54" height="48" rx="6" fill="#cf7312" />
    <rect x="273" y="226" width="66" height="44" rx="6" fill="#cf7312" />
    <path fill="#f2cbb9" d="M174 201h24v36h29v-6l26 20-26 19v-6h-53z" />
    <T x={180} y={162} s={13} b mid c="#fff">Training</T>
    <T x={180} y={177} s={13} b mid c="#fff">phase</T>
    <T x={306} y={243} s={13} b mid c="#fff">Testing</T>
    <T x={306} y={258} s={13} b mid c="#fff">phase</T>
    <T x={225} y={153} s={18}>•  Known parameter – x,y</T>
    <T x={225} y={177} s={18}>• Unknown parameter –</T>
    <T x={237} y={195} s={18}>m,c</T>
    <T x={351} y={234} s={18}>• Known parameter – m,c,x</T>
    <T x={351} y={255} s={18}>• Unknown parameter – y</T>
    <T x={363} y={273} s={18}>predicted</T>
    <Dot x={39} y={293} />
    <T x={57} y={294}>m- slope of a best fit line</T>
    <Dot x={39} y={317} />
    <T x={57} y={318}>c-intercept, when x=0, the value of y is c</T>
  </Mini>
);

const assumptions: { x: number; head: string[]; size: number; body: string[] }[] = [
  { x: 18, head: ["Linearity"], size: 21, body: ["• x is proportional or", "   inversely", "   proportional to y", "• Scatterplot, regplot,", "   correlation matrix", "• Cook’s distance", "   gives the presence of", "   outliers"] },
  { x: 159, head: ["Multi", "collinearity"], size: 17, body: ["• No dependency", "   between input", "   features"] },
  { x: 297, head: ["Auto", "regression"], size: 17, body: ["• The parameters", "   should not be", "   influenced by the", "   time"] },
  { x: 438, head: ["Homo", "scadacity"], size: 17, body: ["• Should have same", "   variance"] },
  { x: 576, head: ["Zero residual", "mean"], size: 14, body: ["• All the points", "   should fall on the", "   best fit line"] },
];

const Slide12 = () => (
  <Mini title="ASSUMPTION – LINEAR REGRESSION" sans>
    <defs>
      <linearGradient id="tile" x1="0" y1="0" x2="0" y2="1">
        <stop offset="0" stopColor="#e3934a" />
        <stop offset="1" stopColor="#bf6b0c" />
      </linearGradient>
    </defs>
    {assumptions.map((a) => (
      <g key={a.x}>
        <rect x={a.x} y="165" width="126" height="165" fill="#f5ddd2" />
        <rect x={a.x} y="114" width="126" height="51" fill="url(#tile)" />
        {a.head.map((line, i) => (
          <T key={line} x={a.x + 63} y={a.head.length === 1 ? 147 : 138 + i * 18} s={a.size} b mid c="#fff">{line}</T>
        ))}
        {a.body.map((line, i) => (
          <text key={line} x={a.x + 7} y={182 + i * 13} fontSize="13" fill="#50534a" xmlSpace="preserve">{line}</text>
        ))}
      </g>
    ))}
  </Mini>
);

const Slide13 = () => (
  <Mini title="REGULARIZATION TECHNIQUE FOR PARAMETRIC MODEL">
    <Dot y={150} />
    <T x={47} y={150}>Helps to reduce overfitting problem in regression type of problem.</T>
    <T x={31} y={174} b c="#222">Overfitting</T>
    <Dot y={198} />
    <T x={47} y={198}>Less bias – less error for train data &amp; High variance – more error for test data</T>
    <Dot y={222} />
    <T x={47} y={222}>Reason – steep slope (within 1 unit change in X axis, there is a huge movement in Y axis)</T>
    <T x={31} y={246} b c="#222">Types</T>
    <T x={31} y={270} b c="#222">Ridge Regression(L2)</T>
    <T x={31} y={294}>Cost function = ∑(ya-yp)²/n +λ*(slope)²</T>
    <Dot y={318} />
    <T x={47} y={318}>The steep slope can be reduced by tweaking learning rate(λ) and slope – CF decreases and hence slope decreases</T>
    <T x={47} y={336}>therefore error also gets decreased</T>
    <Dot y={357} />
    <T x={47} y={357}>Because of introduction λ and slope, train error increases but test error decreases.</T>
  </Mini>
);

const thumbs: { n: number; state?: "hover" | "active"; Art: () => React.JSX.Element }[] = [
  { n: 8, Art: Slide8 },
  { n: 9, Art: Slide9 },
  { n: 10, Art: Slide10, state: "hover" },
  { n: 11, Art: Slide11 },
  { n: 12, Art: Slide12 },
  { n: 13, Art: Slide13, state: "active" },
];

/* ---------- sections ---------- */

const HeaderArt = () => (
  <Artwork viewBox="1550 0 1010 128" preserveAspectRatio="xMaxYMin slice" aria-hidden="true">
    <defs>
      <filter id="grain" x="0" y="0" width="100%" height="100%">
        <feTurbulence type="fractalNoise" baseFrequency="0.7" numOctaves="2" seed="4" />
        <feColorMatrix values="0 0 0 0 0.600  0 0 0 0 0.250  0 0 0 0 0.160  0 0 0 9 -4.600" />
        <feComposite in2="SourceGraphic" operator="in" />
      </filter>
      <linearGradient id="fadeLeft">
        <stop offset="0" stopColor={brandDark} stopOpacity="0" />
        <stop offset="1" stopColor={brandDark} stopOpacity="0.600" />
      </linearGradient>
      <radialGradient id="glow">
        <stop offset="0" stopColor="#000" />
        <stop offset="1" stopColor="#000" stopOpacity="0" />
      </radialGradient>
    </defs>
    <ellipse cx="1850" cy="0" rx="290" ry="120" fill="url(#glow)" filter="url(#grain)" opacity="0.600" />
    <ellipse cx="2150" cy="90" rx="220" ry="60" fill="url(#glow)" filter="url(#grain)" opacity="0.600" />
    <ellipse cx="2330" cy="0" rx="110" ry="50" fill="url(#glow)" filter="url(#grain)" opacity="0.700" />
    <path fill="#a3432b" d="M1598 78V62c3-3 8-2 8-4-13-12-10-50 28-54 18 0 30 15 34 30 6-10 14-10 20-2 10-8 26-4 34 8 8 12 10 26 6 34-30 12-60 8-86 0-20-5-34-2-44 4z" opacity="0.800" />
    <path fill={brandDark} d="M1777 30c0-14 8-24 20-30h100c34 8 52 24 51 53-2 8-10 12-10 22 1 6 4 12 7 18-30-4-60-5-90-4-40 0-74-3-88-11l-1 1c14-10 18-14 18-18-4-8-7-20-7-31z" />
    <path fill={brandDark} d="M1988 0c-2 12 0 36 24 50-14 8-22 20-22 34 30-14 74-12 97-11 34 2 66 14 96 19 26 4 48 5 67 3 26-3 52-22 60-35 2-5-3-4-7-3-24 10-56 16-80 14l-13-5c16 4 40 4 57-5 20-12 32-30 26-61z" />
    <path fill={brandDark} d="M2433 78c0-16 8-27 22-27 12 0 20 8 23 17 6-4 10-2 13 2 10-8 34-3 32 14-2 12-14 20-40 22-26 0-50-8-50-28z" opacity="0.900" />
    <path fill="url(#fadeLeft)" d="M2470 0h90v108c-40-10-60-30-66-50-4-24-14-40-24-58z" opacity="0.700" />
  </Artwork>
);

const tabs = ["File", "Home", "Insert", "Draw", "Design", "Transitions", "Animations", "Slide Show", "Review", "View", "Help", "Storyboarding"];

const Top = () => (
  <Header>
    <HeaderArt />
    <TitleBar>
      <QuickAccess>
        <QuickButton aria-label="Save"><SaveIcon /></QuickButton>
        <QuickButton aria-label="Undo" $gap={13}><UndoIcon /></QuickButton>
        <QuickButton aria-label="Undo history"><Chevron /></QuickButton>
        <QuickButton aria-label="Redo" disabled $gap={5}><RedoIcon /></QuickButton>
        <QuickButton aria-label="Start from beginning" $gap={11}><PresentIcon /></QuickButton>
        <QuickButton aria-label="Customize toolbar" $gap={20}><CustomizeIcon /></QuickButton>
      </QuickAccess>
      <DocumentTitle>{"Machine Learning.pptx  -  PowerPoint"}</DocumentTitle>
      <WindowArea>
        <UserName>john gabriel</UserName>
        <Avatar>JG</Avatar>
        <WindowButton aria-label="Ribbon display options"><DisplayIcon /></WindowButton>
        <WindowButton aria-label="Minimize"><MinIcon /></WindowButton>
        <WindowButton aria-label="Restore"><RestoreIcon /></WindowButton>
        <WindowButton aria-label="Close"><CloseIcon /></WindowButton>
      </WindowArea>
    </TitleBar>
    <TabBar>
      <Tabs aria-label="Ribbon tabs">
        {tabs.map((t) => (
          <Tab key={t} $active={t === "Home"} $file={t === "File"}>{t}</Tab>
        ))}
      </Tabs>
      <TellMe>
        <BulbIcon />
        <TellMeInput aria-label="Tell me what you want to do" placeholder="Tell me what you want to do" />
      </TellMe>
      <ShareButton><PersonIcon />Share</ShareButton>
    </TabBar>
  </Header>
);

const Footer = ({ label, launcher }: { label: string; launcher?: "on" | "off" }) => (
  <GroupFooter>
    <GroupLabel>{label}</GroupLabel>
    {launcher && (
      <Launcher $off={launcher === "off"} aria-label={`${label} settings`}><LauncherIcon /></Launcher>
    )}
  </GroupFooter>
);

const RibbonBar = () => (
  <Ribbon>
    <Group $width={190}>
      <GroupBody $pad={24}>
        <BigButton $width={68}>
          <BigIcon><PasteIcon /></BigIcon>
          <BigLine>Paste</BigLine>
          <BigLine><Chevron /></BigLine>
        </BigButton>
        <Stack $gap={16}>
          <SmallButton aria-label="Cut"><CutIcon /></SmallButton>
          <SmallButton aria-label="Copy" $gap={18}><CopyIcon /><Chevron /></SmallButton>
          <SmallButton aria-label="Format painter"><PainterIcon /></SmallButton>
        </Stack>
      </GroupBody>
      <Footer label="Clipboard" launcher="on" />
    </Group>
    <Divider $tall />
    <Group $width={273}>
      <GroupBody $pad={16}>
        <BigButton $width={82}>
          <BigIcon><NewSlideIcon /></BigIcon>
          <BigLine>New</BigLine>
          <BigLine>Slide <Chevron /></BigLine>
        </BigButton>
        <Stack $gap={8}>
          <SmallButton><LayoutIcon />Layout <Chevron /></SmallButton>
          <SmallButton><ResetIcon />Reset</SmallButton>
          <SmallButton><SectionIcon />Section <Chevron /></SmallButton>
        </Stack>
      </GroupBody>
      <Footer label="Slides" />
    </Group>
    <Divider $tall />
    <Group $width={568}>
      <GroupBody $pad={14}>
        <ToolRows>
          <ToolRow $pad={2}>
            <Combo $width={295}>
              <ComboSelect aria-label="Font" disabled><option></option></ComboSelect>
              <ComboArrow width="10" height="5" viewBox="0 0 10 5"><path fill="#b8b8b8" d="M0 0h10L5 5z" /></ComboArrow>
            </Combo>
            <Combo $width={93}>
              <ComboSelect aria-label="Font size" disabled><option>18</option></ComboSelect>
              <ComboArrow width="10" height="5" viewBox="0 0 10 5"><path fill="#b8b8b8" d="M0 0h10L5 5z" /></ComboArrow>
            </Combo>
            <Tool $width={48} aria-label="Increase font size"><GrowFont /></Tool>
            <Tool $width={46} aria-label="Decrease font size"><GrowFont small /></Tool>
            <Divider />
            <Tool $width={56} aria-label="Clear formatting"><EraserIcon /></Tool>
          </ToolRow>
          <ToolRow>
            <Tool $width={46}><Glyph $kind="bold">B</Glyph></Tool>
            <Tool $width={46}><Glyph $kind="italic">I</Glyph></Tool>
            <Tool $width={46}><Glyph $kind="underline">U</Glyph></Tool>
            <Tool $width={46}><Glyph $kind="shadow">S</Glyph></Tool>
            <Tool $width={48}><Glyph $kind="strike">abc</Glyph></Tool>
            <Tool $width={44} aria-label="Character spacing"><SpacingIcon /></Tool>
            <Tool $width={20} aria-label="Spacing options"><Chevron /></Tool>
            <Tool $width={46} $gap={10}><Glyph $kind="case">Aa</Glyph></Tool>
            <Tool $width={20} aria-label="Case options"><Chevron /></Tool>
            <Divider $gap={11} />
            <Tool $width={50} aria-label="Highlight"><HighlightIcon /></Tool>
            <Tool $width={30} aria-label="Highlight options"><Chevron /></Tool>
            <Tool $width={46} aria-label="Font color"><FontColorIcon /></Tool>
            <Tool $width={30} aria-label="Font color options"><Chevron /></Tool>
          </ToolRow>
        </ToolRows>
      </GroupBody>
      <Footer label="Font" launcher="off" />
    </Group>
    <Divider $tall />
    <Group $width={420}>
      <GroupBody $pad={16}>
        <ToolRows>
          <ToolRow>
            <BulletsButton aria-label="Bullets"><BulletsIcon /><Tint $color={ink}><Chevron /></Tint></BulletsButton>
            <Tool $width={34} aria-label="Numbering"><NumberingIcon /></Tool>
            <Tool $width={38} aria-label="Numbering options"><Chevron /></Tool>
            <Tool $width={42} aria-label="Decrease indent"><IndentIcon out /></Tool>
            <Tool $width={48} aria-label="Increase indent"><IndentIcon /></Tool>
            <Tool $width={46} aria-label="Line spacing"><LineSpacingIcon /></Tool>
            <Tool $width={20} aria-label="Line spacing options"><Chevron /></Tool>
          </ToolRow>
          <ToolRow>
            <Tool $width={46} aria-label="Align left"><AlignIcon kind="left" /></Tool>
            <Tool $width={46} aria-label="Center"><AlignIcon kind="center" /></Tool>
            <Tool $width={46} aria-label="Align right"><AlignIcon kind="right" /></Tool>
            <Tool $width={46} aria-label="Justify"><AlignIcon kind="full" /></Tool>
            <Divider $gap={3} />
            <Tool $width={50} aria-label="Columns"><ColumnsIcon /></Tool>
            <Tool $width={20} aria-label="Column options"><Chevron /></Tool>
          </ToolRow>
        </ToolRows>
        <Stack $gap={14}>
          <SmallButton disabled aria-label="Text direction" $gap={12}><TextDirectionIcon /><Chevron /></SmallButton>
          <SmallButton disabled aria-label="Align text" $gap={12}><AlignTextIcon /><Chevron /></SmallButton>
          <SmallButton disabled aria-label="Convert to SmartArt" $gap={12}><SmartArtIcon /><Chevron /></SmallButton>
        </Stack>
      </GroupBody>
      <Footer label="Paragraph" launcher="off" />
    </Group>
    <Divider $tall />
    <Group $width={728}>
      <GroupBody $pad={18}>
        <Gallery>
          <ShapeGrid>
            {shapes.map((_, i) => (
              <ShapeCell key={i} aria-label={`Shape ${i + 1}`}><ShapeIcon index={i} /></ShapeCell>
            ))}
          </ShapeGrid>
          <GalleryScroll>
            <GalleryScrollButton $off aria-label="Previous shapes"><Triangle up size={10} /></GalleryScrollButton>
            <GalleryScrollButton aria-label="Next shapes"><Triangle size={10} /></GalleryScrollButton>
            <GalleryScrollButton aria-label="All shapes">
              <Icon w={12} h={12}><path d="M0 2h12" /><path fill="currentColor" stroke="none" d="M1 6h10l-5 5z" /></Icon>
            </GalleryScrollButton>
          </GalleryScroll>
        </Gallery>
        <BigButton $width={88} $gap={8}>
          <BigIcon><ArrangeIcon /></BigIcon>
          <BigLine>Arrange</BigLine>
          <BigLine><Chevron /></BigLine>
        </BigButton>
        <BigButton $width={88} $gap={5} disabled>
          <BigIcon><QuickStylesIcon /></BigIcon>
          <BigLine>Quick</BigLine>
          <BigLine>Styles <Chevron /></BigLine>
        </BigButton>
        <Stack $gap={7}>
          <SmallButton disabled><FillIcon />Shape Fill <Chevron /></SmallButton>
          <SmallButton disabled><OutlineIcon />Shape Outline <Chevron /></SmallButton>
          <SmallButton disabled><EffectsIcon />Shape Effects <Chevron /></SmallButton>
        </Stack>
      </GroupBody>
      <Footer label="Drawing" launcher="off" />
    </Group>
    <Divider $tall />
    <Group $width={201}>
      <GroupBody $pad={0}>
        <Stack $gap={24}>
          <SmallButton><FindIcon />Find</SmallButton>
          <SmallButton>
            <ReplaceMark aria-hidden="true">
              <ReplaceLine>a<Tint $color="#9b6bc0">b</Tint></ReplaceLine>
              <ReplaceLine>
                <Icon w={11} h={11} stroke="#3f78b5"><path d="M1 0v4q0 3 3 3h5M6 3l4 4-4 4" /></Icon>
                a<Tint $color="#3f78b5">c</Tint>
              </ReplaceLine>
            </ReplaceMark>
            Replace
            <Tool as="span" $width={26} $gap={4}><Chevron /></Tool>
          </SmallButton>
          <SmallButton><SelectIcon />Select <Chevron /></SmallButton>
        </Stack>
      </GroupBody>
      <Footer label="Editing" />
    </Group>
    <Divider $tall />
    <RibbonTail>
      <button aria-label="Collapse the ribbon"><Icon w={20} h={12}><path d="M1 11l9-9 9 9" /></Icon></button>
    </RibbonTail>
  </Ribbon>
);

const Editor = () => (
  <Workspace>
    <Panel>
      <SlideList>
        {thumbs.map(({ n, state, Art }) => (
          <SlideItem key={n}>
            <SlideNumber $active={state === "active"}>{n}</SlideNumber>
            <Thumb $state={state} aria-label={`Slide ${n}`}><Art /></Thumb>
          </SlideItem>
        ))}
      </SlideList>
      <ScrollRail $gap={4}>
        <ScrollArrow aria-label="Scroll up"><Triangle up /></ScrollArrow>
        <ScrollTrack $before={112}><ScrollThumb $height={96} /></ScrollTrack>
        <ScrollArrow aria-label="Scroll down"><Triangle /></ScrollArrow>
      </ScrollRail>
    </Panel>
    <Pane>
      <Stage>
        <Slide>
          <AccentBars>
            <AccentBar $color={orange} />
            <AccentBar $color={rust} />
            <AccentBar $color={khaki} />
          </AccentBars>
          <SlideTitle>REGULARIZATION TECHNIQUE FOR PARAMETRIC MODEL</SlideTitle>
          <SlideBody>
            <Para $bullet>Helps to reduce overfitting problem in regression type of problem.</Para>
            <Para $bold>Overfitting</Para>
            <Para $bullet>Less bias – less error for train data &amp; High variance – more error for test data</Para>
            <Para $bullet>Reason – steep slope (within 1 unit change in X axis, there is a huge movement in Y axis)</Para>
            <Para $bold>Types</Para>
            <Para $bold>Ridge Regression(L2)</Para>
            <Para>Cost function = ∑(y<sub>a</sub>-y<sub>p</sub>)<sup>2</sup>/n +λ*(slope)<sup>2</sup></Para>
            <Para $bullet>The steep slope can be reduced by tweaking learning rate(λ) and slope – CF decreases and hence slope decreases therefore error also gets decreased</Para>
            <Para $bullet>Because of introduction λ and slope, train error increases but test error decreases.</Para>
          </SlideBody>
        </Slide>
      </Stage>
      <ScrollRail $gap={1} $end={40}>
        <ScrollArrow aria-label="Scroll up"><Triangle up /></ScrollArrow>
        <ScrollTrack $before={168}><ScrollThumb $height={33} /></ScrollTrack>
        <ScrollArrow aria-label="Scroll down"><Triangle /></ScrollArrow>
        <SlideJump aria-label="Previous slide">
          <Icon w={18} h={20} sw={0}><path fill="#777" d="M9 0l9 10H0zM9 10l9 10H0z" /></Icon>
        </SlideJump>
        <SlideJump aria-label="Next slide">
          <Icon w={18} h={20} sw={0}><path fill="#777" d="M0 0h18L9 10zM0 10h18L9 20z" /></Icon>
        </SlideJump>
      </ScrollRail>
    </Pane>
  </Workspace>
);

const Bottom = () => (
  <StatusBar>
    <StatusLeft>
      <span>Slide 13 of 64</span>
      <StatusItem aria-label="Proofing">
        <Icon w={32} h={30} stroke="#666" sw={1.500}>
          <path d="M14 3q-3-2-13-1v20h10q3 0 3 2 0-2 3-2h10M14 3v21M14 3q3-2 13-1v4" />
          <path strokeWidth="3" d="M20 8l9 9M29 8l-9 9" />
        </Icon>
      </StatusItem>
      <StatusItem>English (United States)</StatusItem>
      <StatusItem>
        <Icon w={30} h={28} stroke="#444" sw={2}>
          <path d="M13 2.500A10 10 0 1 0 8 22M18 3a10 10 0 0 1 5 9" />
          <path d="M6 8h13M12.500 8v6l-4 7M12.500 14l4 4M16 16l10 10M26 16L16 26" />
        </Icon>
        Accessibility: Investigate
      </StatusItem>
    </StatusLeft>
    <StatusRight>
      <ViewButton $active aria-label="Normal view">
        <Icon w={26} h={24} stroke="#666" sw={1.500}><path d="M1 1h24v22H1zM8 1v22M8 16h17M12 5h9v7h-9z" /></Icon>
      </ViewButton>
      <ViewButton aria-label="Slide sorter">
        <Icon w={26} h={24} stroke="#666" sw={1.500}><path d="M1 1h10v8H1zM15 1h10v8H15zM1 14h10v9H1zM15 14h10v9H15z" /></Icon>
      </ViewButton>
      <ViewButton aria-label="Reading view">
        <Icon w={28} h={24} stroke="#666" sw={1.500}><path d="M14 2Q9 0 1 1v20q9-1 13 1 4-2 13-1V1q-8-1-13 1zM14 2v22M4 5h6M4 9h6M4 13h6M4 17h6M18 5h6M18 9h6M18 13h6M18 17h6" /></Icon>
      </ViewButton>
      <ViewButton aria-label="Slide show">
        <Icon w={26} h={24} stroke="#666" sw={1.500}><path strokeWidth="3" d="M0 2h26" /><path d="M3 3v12h20V3M7 7h12M13 15v7M9 22h8" /></Icon>
      </ViewButton>
      <ZoomButton aria-label="Zoom out" $before={12} $after={12}><Icon w={15} h={2}><path d="M0 1h15" /></Icon></ZoomButton>
      <ZoomSlider type="range" min={0} max={100} defaultValue={35} aria-label="Zoom" />
      <ZoomButton aria-label="Zoom in" $before={11} $after={26}><Icon w={15} h={16}><path d="M0 8h15M7.500 0v16" /></Icon></ZoomButton>
      <ZoomValue>73%</ZoomValue>
      <button aria-label="Fit slide to window">
        <Icon w={18} h={18} stroke="#666" sw={1.500}><path d="M1 1h16v16H1zM9 3v4M9 11v4M3 9h4M11 9h4" /></Icon>
      </button>
    </StatusRight>
    <ShareBar>
      <ShareStatus>
        <Icon w={20} h={20} sw={0}><path fill="#0b5a12" d="M7 0l7 9h-3c0 5 3 9 9 10-9 2-15-2-15-10H0z" /></Icon>
        <ShareText>You are screen sharing</ShareText>
        <ShareIcon>
          <Icon w={31} h={22} stroke="#0b5a12"><path d="M7 20h18q5-1 5-6 0-4-3-6-1-6-8-7-6-1-9 4-4 0-4 5-5 2-5 6 1 4 6 4z" /><circle cx="16" cy="12" r="5" fill="#f5433f" stroke="none" /></Icon>
        </ShareIcon>
        <ShareIcon>
          <Icon w={20} h={24}><path fill="#23521b" stroke="none" d="M10 0q4 3 10 4v8q0 8-10 12Q0 20 0 12V4q6-1 10-4z" /><path stroke="#24d958" d="M5 12l4 4 7-8" /></Icon>
        </ShareIcon>
      </ShareStatus>
      <StopShare>
        <Icon w={16} h={16} sw={0}><rect width="16" height="16" rx="2" fill="#fff" /></Icon>
        Stop Share
      </StopShare>
    </ShareBar>
  </StatusBar>
);

export default function App() {
  return (
    <Window>
      <GlobalStyle />
      <Top />
      <RibbonBar />
      <Editor />
      <Bottom />
    </Window>
  );
}
